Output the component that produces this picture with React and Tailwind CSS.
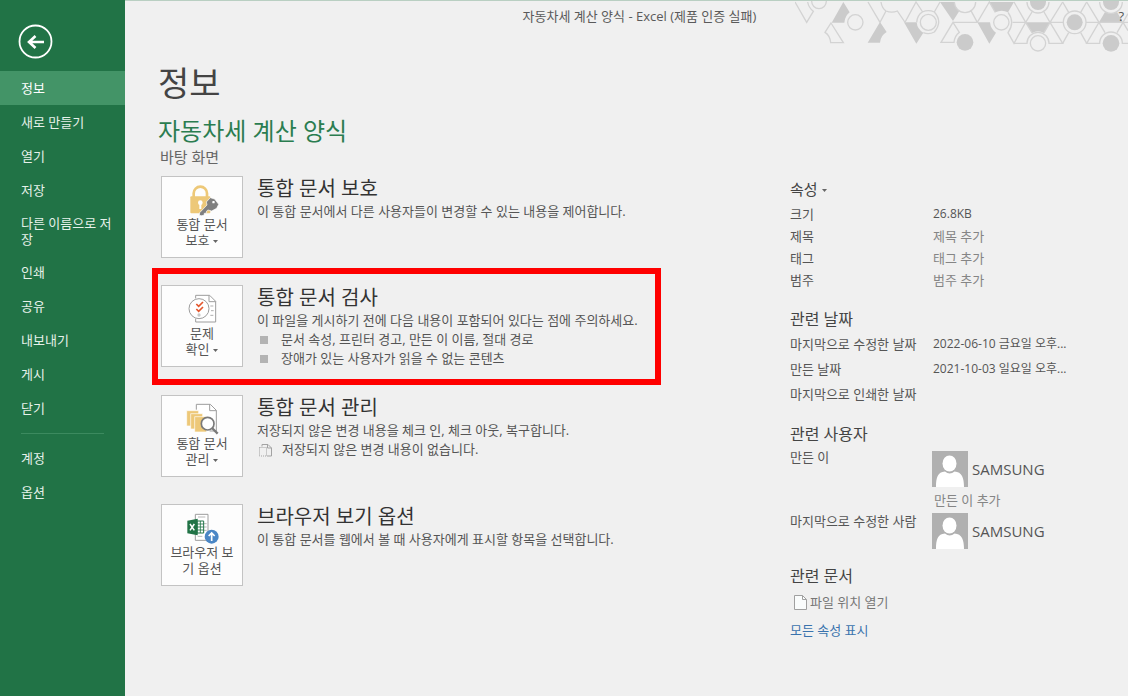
import React from "react";

const PRIMARY_NAV = [
  "정보",
  "새로 만들기",
  "열기",
  "저장",
  "다른 이름으로 저장",
  "인쇄",
  "공유",
  "내보내기",
  "게시",
  "닫기",
];
const SECONDARY_NAV = ["계정", "옵션"];

function Sidebar() {
  return (
    <aside className="w-[125px] shrink-0 bg-[#217346] text-[13px] leading-4 text-[#e6f1ea]">
      <div className="flex h-[71px] items-start pt-[24px] pl-[18px]">
        <button type="button" aria-label="뒤로" className="block size-[35px]">
          <svg viewBox="0 0 35 35" className="size-full" fill="none" stroke="#fff">
            <circle cx="17.5" cy="17.5" r="16" strokeWidth="1.8" />
            <path d="M26 18H11.5M17.5 12l-6.5 6 6.5 6" strokeWidth="2.6" />
          </svg>
        </button>
      </div>
      <nav>
        {PRIMARY_NAV.map((label, i) => (
          <button
            key={label}
            type="button"
            className={
              "flex min-h-[34px] w-full items-center py-2 pr-[10px] pl-[21px] text-left " +
              (i === 0 ? "bg-[#439467] text-white" : "")
            }
          >
            {label}
          </button>
        ))}
        <hr className="mt-2 mr-[21px] mb-[7px] ml-[21px] border-t border-[#3c8a5f]" />
        {SECONDARY_NAV.map((label) => (
          <button
            key={label}
            type="button"
            className="flex min-h-[34px] w-full items-center py-2 pr-[10px] pl-[21px] text-left"
          >
            {label}
          </button>
        ))}
      </nav>
    </aside>
  );
}

function HexPattern() {
  return (
    <svg
      viewBox="45 0 999 156"
      className="absolute top-0 right-0 h-[52px] w-[333px]"
      aria-hidden="true"
    >
      <g fill="#cbcbcb">
        <path d="M190 3L209 34Q195 44 193 65H155Z" />
        <path d="M300 63L320 93Q302 103 300 125H263Z" />
        <path d="M372 64H410Q412 85 430 95L409 128Z" />
        <path d="M480 3H523Q526 22 538 30L519 60Z" />
        <path d="M592 64H630Q632 85 648 95L628 128Z" />
        <path d="M628 3H702L684 34Q665 24 646 34Z" />
        <path d="M737 64H810L792 96Q774 86 756 96Z" />
        <path d="M957 64L975 33Q993 42 1011 33L1029 64Z" />
        <circle cx="555" cy="124" r="25" />
        <circle cx="774" cy="3" r="24" />
        <circle cx="884" cy="64" r="24" />
        <circle cx="993" cy="127" r="25" />
        <circle cx="993" cy="3" r="24" />
      </g>
      <g fill="none" stroke="#d3d3d3" strokeWidth="4">
        <path d="M45 3L80 64L100 31Q86 20 83 3" />
        <circle cx="117" cy="1" r="22" />
        <circle cx="226" cy="64" r="23" />
        <path d="M153 66L190 125H152Q150 103 135 94Z" />
        <path d="M264 3L300 64L318 30M303 3Q306 22 318 30Q335 37 352 30L375 64L408 3L428 33" />
        <circle cx="445" cy="64" r="24" />
        <path d="M410 64Q412 42 427 33Q445 25 463 33L480 3M463 33Q489 62 463 93Q447 102 430 95" />
        <path d="M523 3A32 32 0 0 0 587 3M574 31L592 64M519 64H592L628 3L646 34" />
        <path d="M519 64L538 94Q524 104 522 124H483Z" />
        <circle cx="664" cy="64" r="23" />
        <path d="M684 34Q706 64 684 95L702 127L737 64L702 3M698 64H737" />
        <circle cx="774" cy="127" r="23" />
        <path d="M702 127H741A33 33 0 0 1 807 127H848L810 64L792 33M792 95L810 64M737 64L756 33M737 64L756 95" />
        <path d="M741 3A33 33 0 0 0 807 3M810 64L848 3M810 64H850" />
        <circle cx="884" cy="64" r="34" />
        <path d="M848 3L866 34M920 3L902 34M866 95L848 127M902 95L920 127M918 64H1044" />
        <path d="M920 3L957 64L920 127H959A34 34 0 0 1 1027 127H1044" />
        <path d="M957 64L975 95M1011 95L1029 64L1044 89M1029 64L1044 38M959 3A34 34 0 0 0 1027 3" />
      </g>
    </svg>
  );
}

function LockIcon() {
  return (
    <svg viewBox="101 40 108 99" className="h-[33px] w-[36px]" aria-hidden="true">
      <path d="M130 84V71a20 20 0 0 1 40 0v13" fill="none" stroke="#edc878" strokeWidth="8" />
      <rect x="120" y="80" width="60" height="51" rx="3" fill="#edc878" />
      <circle cx="150" cy="99" r="7" fill="#fff" />
      <path d="M147 100h6v18h-6z" fill="#fff" />
      <g stroke="#fff" strokeWidth="2" fill="#7f7f7f">
        <path d="M180 84l13 4 12 16-6 12-15 8-11-3-4 3-1 6-6 1-1 6-8 1-6-1 1-8 22-23-2-9z" />
      </g>
      <rect x="186" y="94" width="7" height="7" rx="2" fill="#fff" />
    </svg>
  );
}

function InspectIcon() {
  return (
    <svg viewBox="101 85 108 99" className="h-[33px] w-[36px]" aria-hidden="true">
      <g fill="none" stroke="#9d9d9d" strokeWidth="3">
        <path d="M136 104V95h42l18 18v62h-60v-10" fill="#fff" />
        <path d="M176 95v19h20" />
        <path d="M180 127h9M182 141h8M180 155h9" strokeWidth="2.5" />
        <circle cx="146" cy="135" r="30" fill="#fff" />
      </g>
      <g fill="none" stroke="#e4572e" strokeWidth="5">
        <path d="M138 121l7 7 13-13M138 136l7 7 13-13" />
      </g>
      <circle cx="146" cy="154" r="5" fill="#c9c9c9" />
    </svg>
  );
}

function ManageIcon() {
  return (
    <svg viewBox="101 39 108 99" className="h-[33px] w-[36px]" aria-hidden="true">
      <path d="M138 62V46h42l18 18v62h-20" fill="#fff" stroke="#9d9d9d" strokeWidth="3" />
      <path d="M178 46v19h20" fill="none" stroke="#9d9d9d" strokeWidth="3" />
      <g fill="#edc878" stroke="#fff" strokeWidth="2">
        <path d="M109 65h36v46h-36z" />
        <path d="M121 74h36v46h-36z" />
        <path d="M133 83h36v46h-36z" />
      </g>
      <circle cx="172" cy="104" r="19" fill="#fff" stroke="#7a7a7a" strokeWidth="5" />
      <path d="M185 117l17 17" stroke="#7a7a7a" strokeWidth="7" />
    </svg>
  );
}

function BrowserIcon() {
  return (
    <svg viewBox="101 54 108 99" className="h-[33px] w-[36px]" aria-hidden="true">
      <path d="M135 64h38v78h-38z" fill="#fff" stroke="#9d9d9d" strokeWidth="3" />
      <path d="M143 72h22M160 92h9M160 102h9M160 112h9M142 130h14" stroke="#a8a8a8" strokeWidth="2.5" />
      <path d="M140 84h20v36h-20z" fill="#fff" stroke="#217346" strokeWidth="3" />
      <path d="M140 93h20M140 102h20M140 111h20M150 84v36" stroke="#217346" strokeWidth="2.5" />
      <path d="M111 83l31-6v50l-31-6z" fill="#217346" />
      <path d="M119 93l13 19M132 93l-13 19" stroke="#fff" strokeWidth="4.5" />
      <circle cx="184" cy="131" r="21" fill="#4a86c5" />
      <path d="M184 144v-23M175 129l9-9 9 9" fill="none" stroke="#fff" strokeWidth="5" />
    </svg>
  );
}

function Caret() {
  return (
    <svg viewBox="0 0 5 3" className="ml-1 inline-block h-[3px] w-[5px] align-middle" aria-hidden="true">
      <path d="M0 0h5L2.5 3z" fill="#666" />
    </svg>
  );
}

function DraftIcon() {
  return (
    <svg viewBox="0 0 14 14" className="h-[14px] w-[14px]" fill="none" stroke="#a3a3a3" aria-hidden="true">
      <path d="M4 3.5V1.5h6l3.5 3.5v8H9" />
      <path d="M9.5 1.5V5h4" />
      <path d="M1.5 4.5h7v8.5h-7z" strokeDasharray="1 1" />
    </svg>
  );
}

const SECTIONS = [
  {
    icon: LockIcon,
    lines: ["통합 문서", "보호"],
    menu: true,
    title: "통합 문서 보호",
    text: "이 통합 문서에서 다른 사용자들이 변경할 수 있는 내용을 제어합니다.",
  },
  {
    icon: InspectIcon,
    lines: ["문제", "확인"],
    menu: true,
    highlighted: true,
    title: "통합 문서 검사",
    text: "이 파일을 게시하기 전에 다음 내용이 포함되어 있다는 점에 주의하세요.",
    bullets: [
      "문서 속성, 프린터 경고, 만든 이 이름, 절대 경로",
      "장애가 있는 사용자가 읽을 수 없는 콘텐츠",
    ],
  },
  {
    icon: ManageIcon,
    lines: ["통합 문서", "관리"],
    menu: true,
    title: "통합 문서 관리",
    text: "저장되지 않은 변경 내용을 체크 인, 체크 아웃, 복구합니다.",
    note: "저장되지 않은 변경 내용이 없습니다.",
  },
  {
    icon: BrowserIcon,
    lines: ["브라우저 보", "기 옵션"],
    title: "브라우저 보기 옵션",
    text: "이 통합 문서를 웹에서 볼 때 사용자에게 표시할 항목을 선택합니다.",
  },
];

function Section({ icon: Icon, lines, menu, highlighted, title, text, bullets, note }) {
  return (
    <section className="relative flex items-start gap-[14px]">
      {highlighted && (
        <div className="pointer-events-none absolute -top-[17px] right-0 -bottom-[17px] -left-[9px] border-6 border-[#ff0000]" />
      )}
      <button
        type="button"
        className="flex h-[82px] w-[82px] shrink-0 flex-col items-center border border-[#c3c3c3] bg-[#fdfdfd] pt-[6px] text-[13px] leading-4 text-[#555]"
      >
        <Icon />
        <span>{lines[0]}</span>
        <span>
          {lines[1]}
          {menu && <Caret />}
        </span>
      </button>
      <div className="text-[13px] leading-[19px] text-[#555]">
        <h3 className="text-[20px] leading-[26px] text-[#333]">{title}</h3>
        <p>{text}</p>
        {bullets && (
          <ul>
            {bullets.map((b) => (
              <li key={b} className="flex items-center gap-[13px] pl-[3px]">
                <span className="size-2 bg-[#b3b3b3]" />
                {b}
              </li>
            ))}
          </ul>
        )}
        {note && (
          <p className="flex items-center gap-[10px] pl-px">
            <DraftIcon />
            {note}
          </p>
        )}
      </div>
    </section>
  );
}

function Avatar() {
  return (
    <svg viewBox="0 0 36 36" className="size-9 shrink-0" aria-hidden="true">
      <path d="M0 0h36v36H0z" fill="#b0b0b0" />
      <ellipse cx="17.5" cy="12.5" rx="7" ry="8" fill="#fff" />
      <path d="M4 36c0-9 1.5-15 9-15.500 3 2.5 6.5 2.5 9.500 0 7.500.5 9.500 6.500 9.500 15.500z" fill="#fff" />
    </svg>
  );
}

function Person({ name }) {
  return (
    <div className="-ml-px flex items-center gap-1 text-[15px] leading-5 text-[#555]">
      <Avatar />
      {name}
    </div>
  );
}

const EDITABLE = [
  { id: "title", label: "제목" },
  { id: "tag", label: "태그" },
  { id: "category", label: "범주" },
];
const DATES = [
  { label: "마지막으로 수정한 날짜", value: "2022-06-10 금요일 오후..." },
  { label: "만든 날짜", value: "2021-10-03 일요일 오후..." },
  { label: "마지막으로 인쇄한 날짜", value: "" },
];

function Properties() {
  return (
    <aside className="min-w-0 flex-1 text-[13px] leading-[22px] text-[#555]">
      <button type="button" className="block text-[15px] leading-6 text-[#444]">
        속성
        <Caret />
      </button>
      <table className="mt-[2px] w-full table-fixed text-left">
        <tbody>
          <tr className="h-[22px]">
            <th className="w-[143px] p-0 font-normal">크기</th>
            <td className="p-0 text-[12px]">26.8KB</td>
          </tr>
          {EDITABLE.map(({ id, label }) => (
            <tr key={id} className="h-[22px]">
              <th className="p-0 font-normal">
                <label htmlFor={id}>{label}</label>
              </th>
              <td className="p-0">
                <input
                  id={id}
                  placeholder={label + " 추가"}
                  className="block h-[22px] w-full bg-transparent placeholder:text-[#858585]"
                />
              </td>
            </tr>
          ))}
        </tbody>
      </table>

      <h3 className="mt-4 text-[16px] leading-6 text-[#444]">관련 날짜</h3>
      <table className="w-full table-fixed text-left">
        <tbody>
          {DATES.map(({ label, value }) => (
            <tr key={label} className="h-[25px]">
              <th className="w-[143px] p-0 font-normal">{label}</th>
              <td className="p-0 text-[12px] whitespace-nowrap">{value}</td>
            </tr>
          ))}
        </tbody>
      </table>

      <h3 className="mt-4 text-[16px] leading-6 text-[#444]">관련 사용자</h3>
      <table className="w-full table-fixed text-left">
        <tbody>
          <tr>
            <th className="w-[143px] p-0 align-top font-normal">
              <label htmlFor="author">만든 이</label>
            </th>
            <td className="p-0 pt-[5px]">
              <Person name="SAMSUNG" />
              <input
                id="author"
                placeholder="만든 이 추가"
                className="block h-[26px] w-full bg-transparent pl-px placeholder:text-[#858585]"
              />
            </td>
          </tr>
          <tr>
            <th className="p-0 align-top leading-4 font-normal">마지막으로 수정한 사람</th>
            <td className="p-0">
              <Person name="SAMSUNG" />
            </td>
          </tr>
        </tbody>
      </table>

      <h3 className="mt-[15px] text-[16px] leading-6 text-[#444]">관련 문서</h3>
      <button type="button" className="mt-[3px] flex items-center gap-[3px] pl-1 text-[#777]">
        <svg viewBox="0 0 13 15" className="h-[15px] w-[13px]" aria-hidden="true">
          <path d="M.5.5h8l4 4v10H.5z" fill="#fafcfc" stroke="#a0a0a0" />
          <path d="M8.5.5v4h4" fill="none" stroke="#a0a0a0" />
        </svg>
        파일 위치 열기
      </button>
      <a href="#all-properties" className="mt-[6px] block text-[#3a73ad]">
        모든 속성 표시
      </a>
    </aside>
  );
}

export default function App() {
  return (
    <div className="flex min-h-screen bg-[#f0f0f0] font-['Open_Sans','Noto_Sans_CJK_KR',sans-serif]">
      <Sidebar />
      <div className="relative min-w-0 flex-1 border-t border-[#b9cfc2]">
        <HexPattern />
        <header className="relative flex h-[30px] items-center justify-center pl-[26px] text-[13px] leading-5 text-[#5a5a5a]">
          자동차세 계산 양식 - Excel (제품 인증 실패)
          <button type="button" aria-label="도움말" className="absolute right-1 text-[13px] text-[#555]">
            ?
          </button>
        </header>
        <main className="pt-[31px] pb-8 pl-[33px]">
          <h1 className="text-[34px] leading-[42px] text-[#444]">정보</h1>
          <h2 className="mt-[11px] text-[24px] leading-8 text-[#2b7d50]">자동차세 계산 양식</h2>
          <p className="pl-[2px] text-[15px] leading-5 text-[#666]">바탕 화면</p>
          <div className="flex items-start gap-[129px] pl-[3px]">
            <div className="flex w-[500px] shrink-0 flex-col gap-[27px] pt-[9px]">
              {SECTIONS.map((s) => (
                <Section key={s.title} {...s} />
              ))}
            </div>
            <div className="flex min-w-0 flex-1 pt-[10px]">
              <Properties />
            </div>
          </div>
        </main>
      </div>
    </div>
  );
}
